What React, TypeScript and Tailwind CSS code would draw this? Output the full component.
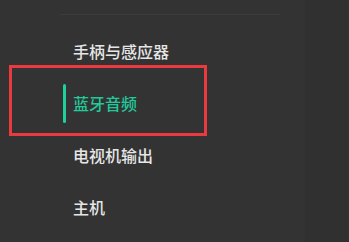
const items = ['手柄与感应器', '蓝牙音频', '电视机输出', '主机'];

export default function App() {
  const active = 1;
  return (
    <div
      className="relative flex h-[242px] w-[349px] overflow-hidden bg-[#333333]"
      style={{ fontFamily: '"Noto Sans CJK SC", "Noto Sans", sans-serif' }}
    >
      <div className="w-[305px] shrink-0 pt-[14px]">
        <div className="ml-[60px] h-px w-[220px] bg-[#3b3b3b]" />
        <ul className="mt-[10px]">
          {items.map((label, i) => (
            <li key={label} className="flex h-[52px] items-center pl-[63px]">
              {i === active ? (
                <>
                  <span className="h-[39px] w-[3px] rounded-full bg-[#1fcf9c]" />
                  <span className="ml-[7px] text-[16px] font-medium leading-none text-[#22c99b]">{label}</span>
                </>
              ) : (
                <span className="ml-[10px] text-[16px] font-medium leading-none text-[#e6e6e6]">{label}</span>
              )}
            </li>
          ))}
        </ul>
      </div>
      <div className="flex-1 bg-[#303030]" />

      {/* annotation box around the selected row */}
      <div className="pointer-events-none absolute left-[9px] top-[65px] h-[71px] w-[198px] border-[3px] border-[#e83a3f]" />
    </div>
  );
}
